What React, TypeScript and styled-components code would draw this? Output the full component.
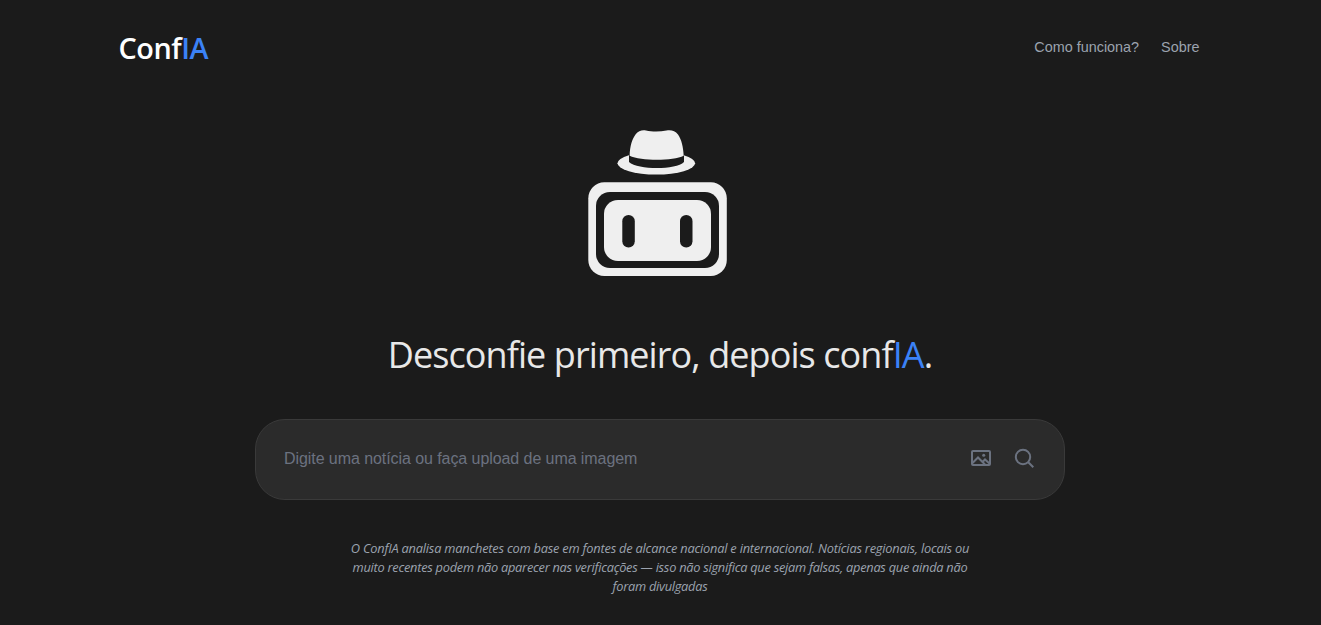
import React from 'react';
import styled, { createGlobalStyle } from 'styled-components';

const GlobalStyle = createGlobalStyle`
  * { box-sizing: border-box; }
  body {
    margin: 0;
    background: #1b1b1b;
    color: #e8e8e8;
    font-family: "Open Sans", "Noto Sans", sans-serif;
    overflow: hidden;
  }
`;

const Page = styled.div`
  width: 1320px;
  height: 625px;
  display: flex;
  flex-direction: column;
  align-items: center;
`;

const Header = styled.header`
  width: 1081px;
  height: 96px;
  padding-right: 1px;
  display: flex;
  align-items: center;
  justify-content: space-between;
`;

const Brand = styled.div`
  margin-left: -1px;
  font-size: 28.8px;
  line-height: 38px;
  font-weight: 600;
  letter-spacing: -0.45px;
  color: #fff;
  white-space: nowrap;
`;

const Accent = styled.span`
  color: #3b82f6;
`;

const Nav = styled.nav`
  display: flex;
  gap: 22px;
  padding-bottom: 2px;
  font: 14.4px/18px "Liberation Sans", sans-serif;
`;

const NavLink = styled.a`
  color: #9ca3af;
`;

const Mascot = styled.svg`
  display: block;
  width: 160px;
  height: 160px;
  margin-top: 24px;
`;

const Title = styled.h1`
  margin: 50px 0 0;
  font-size: 36px;
  line-height: 49px;
  font-weight: 400;
  letter-spacing: -0.92px;
  white-space: nowrap;
`;

const SearchBox = styled.form`
  width: 810px;
  height: 81px;
  margin-top: 40px;
  padding: 0 28px 3px;
  display: flex;
  align-items: center;
  background: #2b2b2b;
  border: 1px solid #3a3a3a;
  border-radius: 30px;
`;

const SearchInput = styled.input`
  flex: 1;
  padding: 2px 0 0;
  border: 0;
  outline: 0;
  background: transparent;
  color: #e8e8e8;
  font: 16px/20px "Liberation Sans", sans-serif;
  letter-spacing: -0.07px;
  &::placeholder { color: #6b7280; opacity: 1; }
`;

const IconButton = styled.button`
  width: 24px;
  height: 24px;
  margin-left: 20px;
  padding: 0;
  border: 0;
  background: none;
  color: #6b7280;
  svg { display: block; }
`;

const Notice = styled.p`
  margin: 39px 0 0;
  font-size: 12.8px;
  line-height: 19px;
  font-style: italic;
  color: #9ca3af;
  text-align: center;
`;

const NoticeLine = styled.span<{ $spacing: number }>`
  display: block;
  white-space: nowrap;
  letter-spacing: ${(p) => p.$spacing}px;
`;

export default function App() {
  return (
    <Page>
      <GlobalStyle />
      <Header>
        <Brand>Conf<Accent>IA</Accent></Brand>
        <Nav>
          <NavLink>Como funciona?</NavLink>
          <NavLink>Sobre</NavLink>
        </Nav>
      </Header>
      <Mascot viewBox="580 120 160 160" fill="#efefef">
        <ellipse cx="656.3" cy="163.3" rx="38.8" ry="11.3" />
        <path fill="#1b1b1b" d="M629 155h55v7c-8 8-46 8-55 0Z" />
        <path d="M629.600 155.800C630 146 632 139.500 635.500 134.500C638.500 130.500 642 130 646 130.500C652 131.800 660 131.800 666.500 130.500C671 129.800 675 130.500 678 134.500C681.500 139.500 683.300 147 683.700 155.800C673 161.200 641 161.200 629.600 155.800Z" />
        <rect x="588.300" y="182.300" width="138.500" height="93.700" rx="16" />
        <rect x="596" y="192" width="123" height="76" rx="14" fill="#1b1b1b" />
        <rect x="604" y="200" width="107" height="61" rx="14" />
        <rect x="622.300" y="215" width="12.500" height="32.500" rx="6.200" fill="#1b1b1b" />
        <rect x="680" y="215" width="12.500" height="32.500" rx="6.200" fill="#1b1b1b" />
      </Mascot>
      <Title>Desconfie primeiro, depois conf<Accent>IA</Accent>.</Title>
      <SearchBox>
        <SearchInput placeholder="Digite uma notícia ou faça upload de uma imagem" />
        <IconButton type="button" aria-label="Imagem">
          <svg width="24" height="24" viewBox="0 0 24 24" fill="none" stroke="currentColor" strokeWidth="2">
            <rect x="4" y="5" width="18" height="14" rx="1" />
            <path d="m4.500 17 5.500-5.500 7 7M14.500 16l2.500-2.500 5 4.500" />
            <circle cx="15.700" cy="9.300" r="1.500" fill="currentColor" stroke="none" />
          </svg>
        </IconButton>
        <IconButton type="button" aria-label="Buscar">
          <svg width="24" height="24" viewBox="0 0 24 24" fill="none" stroke="currentColor" strokeWidth="2">
            <circle cx="11" cy="11" r="7.200" />
            <path d="m16 16 5.300 5.300" />
          </svg>
        </IconButton>
      </SearchBox>
      <Notice>
        <NoticeLine $spacing={-0.21}>O ConfIA analisa manchetes com base em fontes de alcance nacional e internacional. Notícias regionais, locais ou</NoticeLine>
        <NoticeLine $spacing={-0.26}>muito recentes podem não aparecer nas verificações — isso não significa que sejam falsas, apenas que ainda não</NoticeLine>
        <NoticeLine $spacing={-0.26}>foram divulgadas</NoticeLine>
      </Notice>
    </Page>
  );
}
